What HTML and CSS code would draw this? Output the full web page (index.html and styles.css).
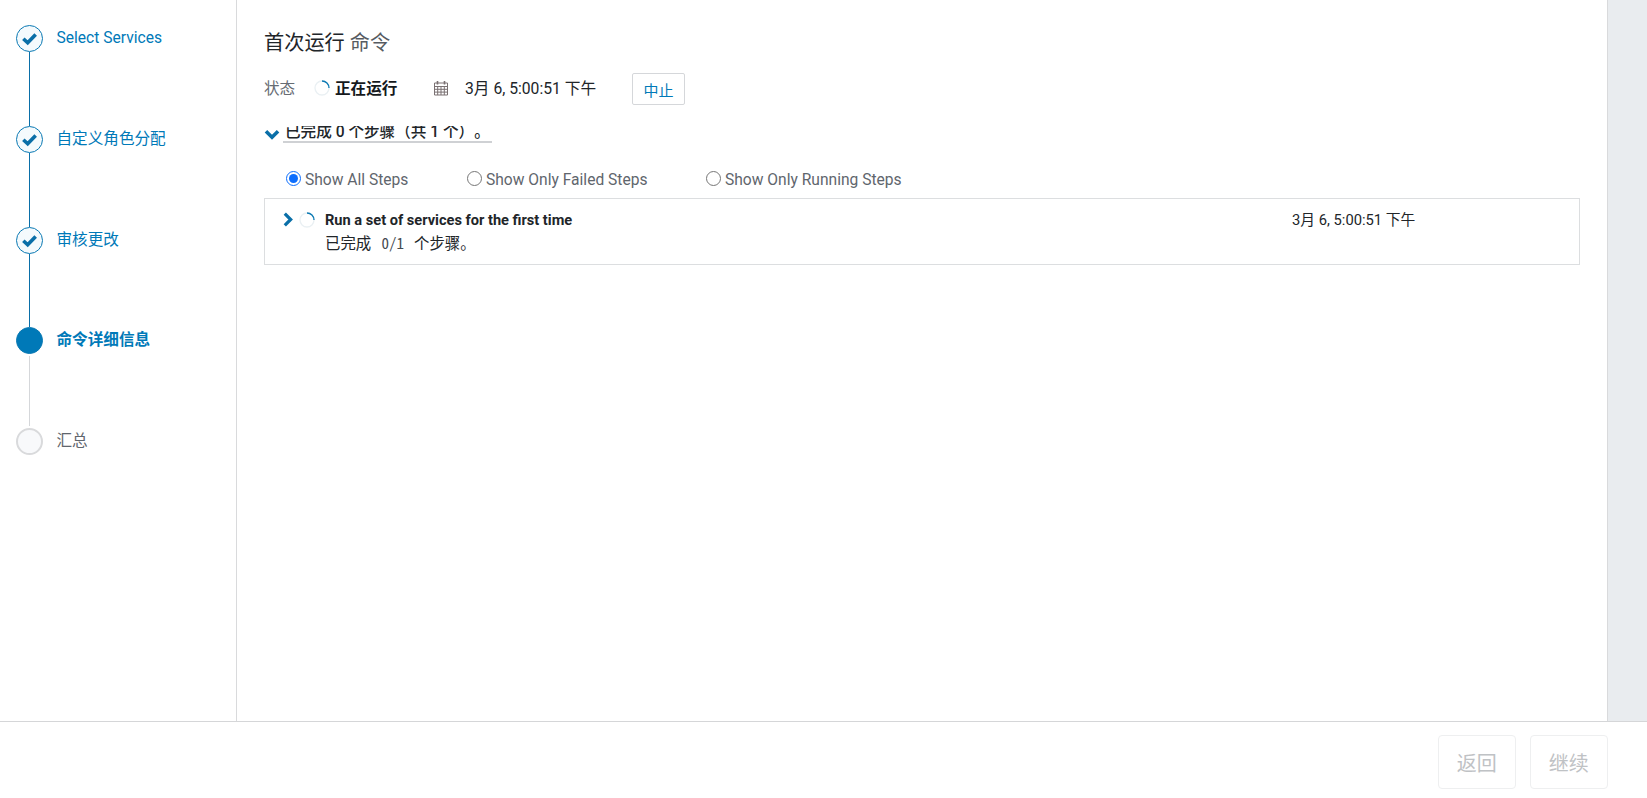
FILE: index.html
```html
<!DOCTYPE html>
<html lang="zh">
<head>
<meta charset="utf-8">
<title>首次运行 命令</title>
<link rel="stylesheet" href="styles.css">
</head>
<body>
<div class="main">
  <nav class="wizard">
    <div class="step done">
      <span class="dot"><svg class="check" viewBox="0 0 16 16"><path d="M2.2 8.2 6.3 12 13.8 4.2" /></svg></span>
      <span class="step-label">Select Services</span>
    </div>
    <div class="step done">
      <span class="dot"><svg class="check" viewBox="0 0 16 16"><path d="M2.2 8.2 6.3 12 13.8 4.2" /></svg></span>
      <span class="step-label">自定义角色分配</span>
    </div>
    <div class="step done">
      <span class="dot"><svg class="check" viewBox="0 0 16 16"><path d="M2.2 8.2 6.3 12 13.8 4.2" /></svg></span>
      <span class="step-label">审核更改</span>
    </div>
    <div class="step current">
      <span class="dot"></span>
      <span class="step-label">命令详细信息</span>
    </div>
    <div class="step todo">
      <span class="dot"></span>
      <span class="step-label">汇总</span>
    </div>
  </nav>
  <section class="content">
    <h1 class="title">首次运行 <span class="title-sub">命令</span></h1>
    <div class="status-row">
      <span class="status-label">状态</span>
      <svg class="spinner" viewBox="0 0 16 16"><circle class="sp-track" cx="8" cy="8" r="7"/><path class="sp-arc" d="M8 1A7 7 0 0 1 15 8"/></svg>
      <strong class="status-value">正在运行</strong>
      <svg class="calendar" viewBox="0 0 16 16"><path class="cal-body" d="M1.5 3h13v12h-13zM1.5 6.5h13M1.5 9.3h13M1.5 12.1h13M4.7 6.5V15M8 6.5V15M11.3 6.5V15"/><path class="cal-ring" d="M4.5 1v3.5M11.5 1v3.5"/></svg>
      <span class="status-date">3月 6, 5:00:51 下午</span>
      <button class="abort">中止</button>
    </div>
    <div class="summary">
      <svg class="chev-down" viewBox="0 0 14 10"><path d="M1.5 2 7 7.5 12.5 2"/></svg>
      <span class="summary-text">已完成 0 个步骤（共 1 个）。</span>
    </div>
    <div class="filters">
      <label class="filter f1"><input type="radio" name="f" checked>Show All Steps</label>
      <label class="filter f2"><input type="radio" name="f">Show Only Failed Steps</label>
      <label class="filter"><input type="radio" name="f">Show Only Running Steps</label>
    </div>
    <div class="cmd-box">
      <svg class="chev-right" viewBox="0 0 10 14"><path d="M2 1.5 7.5 7 2 12.5"/></svg>
      <svg class="spinner" viewBox="0 0 16 16"><circle class="sp-track" cx="8" cy="8" r="7"/><path class="sp-arc" d="M8 1A7 7 0 0 1 15 8"/></svg>
      <div class="cmd-text">
        <div class="cmd-title">Run a set of services for the first time</div>
        <div class="cmd-sub">已完成 <span class="cmd-count">0/1</span> 个步骤。</div>
      </div>
      <div class="cmd-date">3月 6, 5:00:51 下午</div>
    </div>
  </section>
  <aside class="rail"></aside>
</div>
<footer class="footer">
  <button class="nav-btn" disabled>返回</button>
  <button class="nav-btn" disabled>继续</button>
</footer>
</body>
</html>
```
FILE: styles.css
```css
* { box-sizing: border-box; }
html, body { margin: 0; height: 798px; overflow: hidden; }
body {
  font-family: Roboto, "Noto Sans CJK SC", sans-serif;
  font-size: 14px;
  color: #212529;
  background: #fff;
  display: flex;
  flex-direction: column;
  text-spacing-trim: space-all;
}
.main { display: flex; height: 722px; border-bottom: 1px solid #d5d6d8; }

.wizard { width: 237px; flex: none; border-right: 1px solid #d9dadc; padding-top: 25px; }
.step { position: relative; display: flex; height: 100.75px; padding-left: 16px; }
.step::before {
  content: "";
  position: absolute;
  left: 29px;
  top: 27px;
  bottom: 0;
  width: 1px;
  background: #0a6fa8;
}
.step:last-child::before { display: none; }
.current::before { background: #d5d7da; top: 29px; bottom: 2px; }
.dot {
  width: 27px;
  height: 27px;
  flex: none;
  border-radius: 50%;
  border: 1px solid #0a79b3;
  background: #f4fafd;
  display: flex;
  align-items: center;
  justify-content: center;
}
.current .dot { background: #0079b8; }
.todo .dot { border: 2px solid #d9dadc; background: #f8f9fb; }
.check { width: 17px; height: 17px; fill: none; stroke: #0a6fa8; stroke-width: 3.4; }
.step-label { margin-left: 13.5px; margin-top: 1px; font-size: 15.6px; line-height: 24px; color: #0079b8; }
.current .step-label { font-weight: 700; margin-top: 1px; }
.todo .step-label { color: #5f666d; margin-top: 1px; }

.content { flex: 1; min-width: 0; padding: 27px 27px 0 27px; }
.title { margin: 0; font-size: 20.2px; font-weight: 400; line-height: 32px; color: #212529; }
.title-sub { color: #565b61; }

.status-row { display: flex; align-items: center; height: 32px; margin-top: 14px; }
.status-label { font-size: 15.6px; color: #666c73; width: 50px; margin-bottom: 5px; }
.spinner { width: 16px; height: 16px; flex: none; fill: none; stroke-width: 1.3; }
.status-row .spinner, .calendar { margin-bottom: 2px; }
.sp-track { stroke: #eaf0f3; }
.sp-arc { stroke: #0a79b3; }
.status-value { font-size: 15.6px; font-weight: 700; color: #15191c; margin-left: 5px; width: 98px; margin-bottom: 5px; }
.calendar { width: 16px; height: 16px; flex: none; fill: none; }
.cal-body { stroke: #7a7172; stroke-width: 1; }
.cal-ring { stroke: #7a7172; stroke-width: 1.6; }
.status-date { font-size: 15.7px; color: #212529; margin-left: 16px; width: 167px; white-space: nowrap; margin-bottom: 3px; }
.abort {
  width: 53px;
  height: 32px;
  padding: 0;
  font: inherit;
  font-size: 15px;
  color: #0079b8;
  background: #fff;
  border: 1px solid #d5d7da;
  border-radius: 2px;
}

.summary { display: flex; height: 19px; margin-top: 19px; }
.chev-down { width: 16px; height: 11px; margin: 5px 0 0 0; flex: none; fill: none; stroke: #0a6fa8; stroke-width: 3.2; }
.summary-text {
  margin: 2px 0 0 3px;
  width: 209px;
  height: 17px;
  padding-left: 2px;
  overflow: hidden;
  border-bottom: 2px solid #cfd1d4;
  font-size: 15.6px;
  font-weight: 500;
  line-height: 13px;
  white-space: nowrap;
  color: #212529;
}

.filters { display: flex; align-items: center; height: 24px; margin: 25px 0 6px 22px; }
.filter { display: flex; align-items: center; font-size: 15.6px; color: #5f666d; }
.filter input { margin: 0 4px 4px 0; width: 15px; height: 15px; flex: none; accent-color: #0d6efd; }
.f1 { width: 181px; }
.f2 { width: 239px; }

.cmd-box {
  display: flex;
  height: 67px;
  border: 1.5px solid #dcdee0;
  padding: 13px 0 0 17px;
}
.chev-right { width: 12px; height: 15px; margin-right: 5px; flex: none; fill: none; stroke: #0a6fa8; stroke-width: 3; }
.cmd-text { margin-left: 10px; width: 967px; flex: none; }
.cmd-title { font-size: 14.6px; font-weight: 700; line-height: 16px; color: #212529; }
.cmd-sub {
  font-family: "Noto Sans Mono CJK SC", "DejaVu Sans Mono", "Noto Sans CJK SC", monospace;
  font-size: 15.4px;
  font-weight: 300;
  word-spacing: 2.5px;
  line-height: 20px;
  margin-top: 4px;
  color: #212529;
}
.cmd-count { color: #454a50; font-size: 15px; }
.cmd-date { font-size: 14.75px; line-height: 16px; color: #212529; white-space: nowrap; }

.rail { width: 40px; flex: none; background: #e9ecef; border-left: 1px solid #d9dadc; }

.footer { flex: 1; display: flex; justify-content: flex-end; gap: 13.5px; padding: 13px 39px 0 0; }
.nav-btn {
  width: 78.5px;
  height: 54px;
  font: inherit;
  font-size: 20px;
  color: #bfc2c5;
  background: #fff;
  border: 1px solid #eeeff0;
  border-radius: 4px;
}
```
